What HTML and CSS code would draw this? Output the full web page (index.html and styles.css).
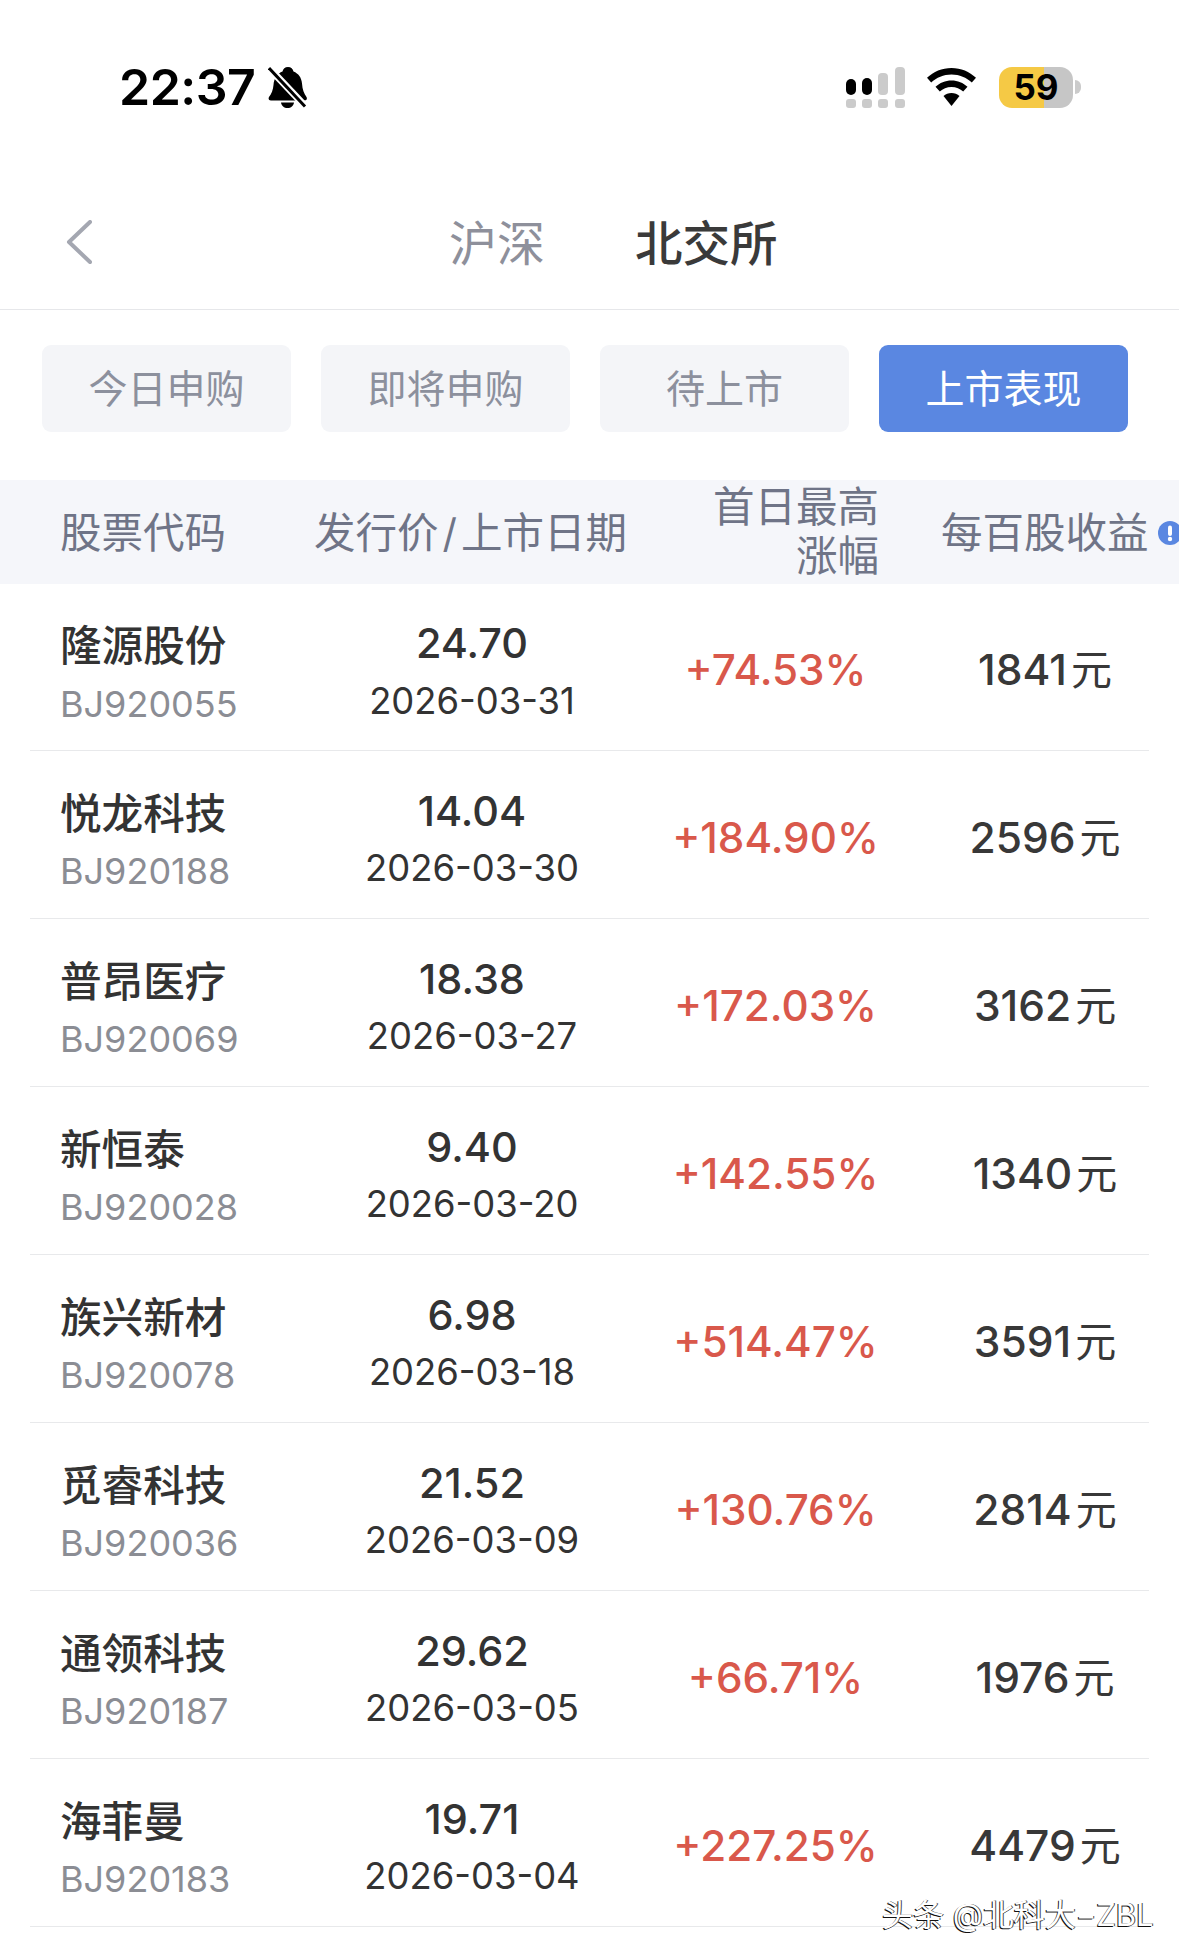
FILE: index.html
```html
<!DOCTYPE html>
<html lang="zh-CN">
<head>
<meta charset="utf-8">
<title>上市表现</title>
<link rel="stylesheet" href="styles.css">
</head>
<body>
<div class="page">
  <header class="status">
    <div class="status-left">
      <span class="time">22:37</span>
      <svg class="bell" viewBox="0 0 39 42"><path d="M20 1c3 0 5 2 5.500 4.500 5 2 8 6 8.500 12 .4 6 2 10 4.500 13.500 1 2 0 3.500-2 3.500H3c-2 0-3-1.500-2-3.500 2.500-3 4-7 4.500-12 .5-7 4-11.500 9-13.500C15 3 17 1 20 1z"/><path d="M13 36.500h13c-.5 3.500-3 5.500-6.500 5.500S13.500 40 13 36.500z"/><path class="bell-gap" d="M2 3l35 37"/><path class="bell-slash" d="M1 2l36 38.500"/></svg>
    </div>
    <div class="status-right">
      <svg class="signal" viewBox="0 0 59 41"><rect class="on" x="0" y="12" width="10" height="16" rx="5"/><rect class="on" x="16" y="11" width="10" height="17" rx="5"/><rect class="off" x="32" y="6" width="10" height="22" rx="4"/><rect class="off" x="49" y="0" width="10" height="28" rx="4"/><rect class="off" x="0" y="32" width="10" height="9" rx="3"/><rect class="off" x="16" y="32" width="10" height="9" rx="3"/><rect class="off" x="32" y="32" width="10" height="9" rx="3"/><rect class="off" x="49" y="32" width="10" height="9" rx="3"/></svg>
      <svg class="wifi" viewBox="0 0 49 38"><path d="M24.500 0C15 0 6.500 3.700 0 9.800l4.200 4.700C9.500 9.600 16.600 6.500 24.500 6.500s15 3.100 20.300 8L49 9.800C42.500 3.700 34 0 24.500 0z"/><path d="M24.500 12.500c-6.200 0-11.800 2.400-16 6.300l4.300 4.800c3-2.800 7.100-4.600 11.700-4.600s8.700 1.800 11.700 4.600l4.300-4.800c-4.200-3.900-9.800-6.300-16-6.300z"/><path d="M24.500 25c-3.100 0-5.900 1.200-8 3.100l8 9.900 8-9.900c-2.100-1.900-4.900-3.100-8-3.100z"/></svg>
      <div class="battery"><div class="battery-body"><span class="battery-level">59</span></div><span class="battery-nub"></span></div>
    </div>
  </header>

  <nav class="nav">
    <svg class="back" viewBox="0 0 26 44"><path d="M24 2L3 22l21 20"/></svg>
    <span class="nav-item">沪深</span>
    <span class="nav-item nav-active">北交所</span>
  </nav>

  <div class="tabs">
    <div class="tab">今日申购</div>
    <div class="tab">即将申购</div>
    <div class="tab">待上市</div>
    <div class="tab tab-active">上市表现</div>
  </div>

  <div class="thead">
    <div class="th th-name">股票代码</div>
    <div class="th th-price">发行价<span class="slash">/</span>上市日期</div>
    <div class="th th-rise">首日最高<br>涨幅</div>
    <div class="th th-gain">每百股收益<svg class="info" viewBox="0 0 24 24"><circle cx="12" cy="12" r="12"/><rect x="10" y="4.500" width="4" height="10.500" rx="2"/><circle cx="12" cy="18" r="2.200"/></svg></div>
  </div>

  <div class="row">
    <div class="stock"><div class="name">隆源股份</div><div class="code">BJ920055</div></div>
    <div class="issue"><div class="price">24.70</div><div class="date">2026-03-31</div></div>
    <div class="rise">+74.53%</div>
    <div class="gain">1841<span class="yuan">元</span></div>
  </div>
  <div class="row">
    <div class="stock"><div class="name">悦龙科技</div><div class="code">BJ920188</div></div>
    <div class="issue"><div class="price">14.04</div><div class="date">2026-03-30</div></div>
    <div class="rise">+184.90%</div>
    <div class="gain">2596<span class="yuan">元</span></div>
  </div>
  <div class="row">
    <div class="stock"><div class="name">普昂医疗</div><div class="code">BJ920069</div></div>
    <div class="issue"><div class="price">18.38</div><div class="date">2026-03-27</div></div>
    <div class="rise">+172.03%</div>
    <div class="gain">3162<span class="yuan">元</span></div>
  </div>
  <div class="row">
    <div class="stock"><div class="name">新恒泰</div><div class="code">BJ920028</div></div>
    <div class="issue"><div class="price">9.40</div><div class="date">2026-03-20</div></div>
    <div class="rise">+142.55%</div>
    <div class="gain">1340<span class="yuan">元</span></div>
  </div>
  <div class="row">
    <div class="stock"><div class="name">族兴新材</div><div class="code">BJ920078</div></div>
    <div class="issue"><div class="price">6.98</div><div class="date">2026-03-18</div></div>
    <div class="rise">+514.47%</div>
    <div class="gain">3591<span class="yuan">元</span></div>
  </div>
  <div class="row">
    <div class="stock"><div class="name">觅睿科技</div><div class="code">BJ920036</div></div>
    <div class="issue"><div class="price">21.52</div><div class="date">2026-03-09</div></div>
    <div class="rise">+130.76%</div>
    <div class="gain">2814<span class="yuan">元</span></div>
  </div>
  <div class="row">
    <div class="stock"><div class="name">通领科技</div><div class="code">BJ920187</div></div>
    <div class="issue"><div class="price">29.62</div><div class="date">2026-03-05</div></div>
    <div class="rise">+66.71%</div>
    <div class="gain">1976<span class="yuan">元</span></div>
  </div>
  <div class="row">
    <div class="stock"><div class="name">海菲曼</div><div class="code">BJ920183</div></div>
    <div class="issue"><div class="price">19.71</div><div class="date">2026-03-04</div></div>
    <div class="rise">+227.25%</div>
    <div class="gain">4479<span class="yuan">元</span></div>
  </div>

  <div class="watermark">头条 @北科大−ZBL</div>
</div>
</body>
</html>
```
FILE: styles.css
```css
* { box-sizing: border-box; }
html, body { margin: 0; padding: 0; background: #fff; }
body { font-family: Inter, "Noto Sans CJK SC", sans-serif; color: #333; }
.page { position: relative; width: 1179px; height: 1957px; overflow: hidden; background: #fff; }

.status { height: 178px; padding: 65px 98px 0 119px; display: flex; justify-content: space-between; align-items: flex-start; }
.status-left { display: flex; align-items: center; height: 44px; gap: 13px; }
.time { font-size: 50px; font-weight: 600; line-height: 44px; color: #000; letter-spacing: -0.5px; }
.bell { width: 39px; height: 42px; }
.bell path { fill: #000; }
.bell .bell-gap { fill: none; stroke: #fff; stroke-width: 7; }
.bell .bell-slash { fill: none; stroke: #000; stroke-width: 3; }
.status-right { display: flex; align-items: center; height: 44px; }
.signal { width: 59px; height: 41px; }
.signal .on { fill: #000; }
.signal .off { fill: #cbcbcb; }
.wifi { width: 49px; height: 38px; margin-left: 22px; }
.wifi path { fill: #000; }
.battery { display: flex; align-items: center; margin-left: 23px; }
.battery-body { width: 74px; height: 41px; border-radius: 13px; background: linear-gradient(90deg, #f5c945 0, #f5c945 45px, #c6c6c6 45px, #c6c6c6 100%); text-align: center; }
.battery-level { font-size: 35px; font-weight: 700; line-height: 41px; color: #000; }
.battery-nub { width: 6px; height: 14px; margin-left: 2px; background: #cbcbcb; border-radius: 0 7px 7px 0; }

.nav { height: 132px; display: flex; align-items: center; padding-left: 66px; border-bottom: 1px solid #e6e7ea; }
.back { width: 26px; height: 44px; margin: -3px 357px 0 0; }
.back path { fill: none; stroke: #a4a7b1; stroke-width: 4; stroke-linecap: round; stroke-linejoin: round; }
.nav-item { font-size: 48px; line-height: 60px; color: #8e909b; }
.nav-active { margin-left: 90px; font-size: 47.500px; color: #3a3a3a; font-weight: 500; }

.tabs { display: grid; grid-template-columns: repeat(4, 249px); gap: 30px; padding: 35px 0 0 42px; height: 122px; }
.tab { display: flex; align-items: center; justify-content: center; padding-bottom: 5px; background: #f4f5f8; border-radius: 9px; font-size: 39px; color: #8c909d; }
.tab-active { background: #5a87e1; color: #fff; }

.thead { margin-top: 48px; height: 104px; padding-top: 2px; background: #f5f6fa; display: grid; grid-template-columns: 314px 312px 253px 300px; align-items: center; color: #6f7487; }
.th { font-size: 41.500px; line-height: 49px; white-space: nowrap; }
.th-name { padding-left: 60px; }
.th-price { text-align: left; }
.th-rise { margin-top: -2px; text-align: right; }
.th-gain { display: flex; align-items: center; padding-left: 62px; }
.slash { font-size: 40px; margin: 0 4px; }
.info { width: 24px; height: 24px; margin-left: 9px; flex: none; }
.info circle:first-child { fill: #5a87e1; }
.info rect, .info circle:last-child { fill: #fff; }

.row { height: 168px; margin: 0 30px; display: grid; grid-template-columns: 304px 276px 331px 208px; align-items: center; border-bottom: 1px solid #e8e9eb; }
.thead + .row { height: 167px; }
.stock { padding: 13px 0 0 30px; }
.name { font-size: 41.600px; font-weight: 500; line-height: 54px; color: #333; }
.code { font-size: 36px; line-height: 48px; margin-top: 6.500px; color: #8b8d94; }
.issue { padding-top: 8px; text-align: center; }
.price { font-size: 41.400px; font-weight: 500; line-height: 54px; margin-top: -1px; color: #333; }
.date { font-size: 36.400px; line-height: 48px; margin-top: 6.500px; color: #333; }
.rise { padding-top: 5px; text-align: center; font-size: 42.200px; font-weight: 500; color: #d9584b; }
.gain { text-align: center; font-size: 42.500px; font-weight: 500; color: #383838; }
.yuan { font-size: 41px; font-weight: 400; margin-left: 4px; }

.watermark { position: absolute; left: 882px; top: 1896px; font-size: 31px; line-height: 38px; white-space: nowrap; color: #fff; text-shadow: -1px 1px 0 #111, 1px 0 0 #444; }
```
